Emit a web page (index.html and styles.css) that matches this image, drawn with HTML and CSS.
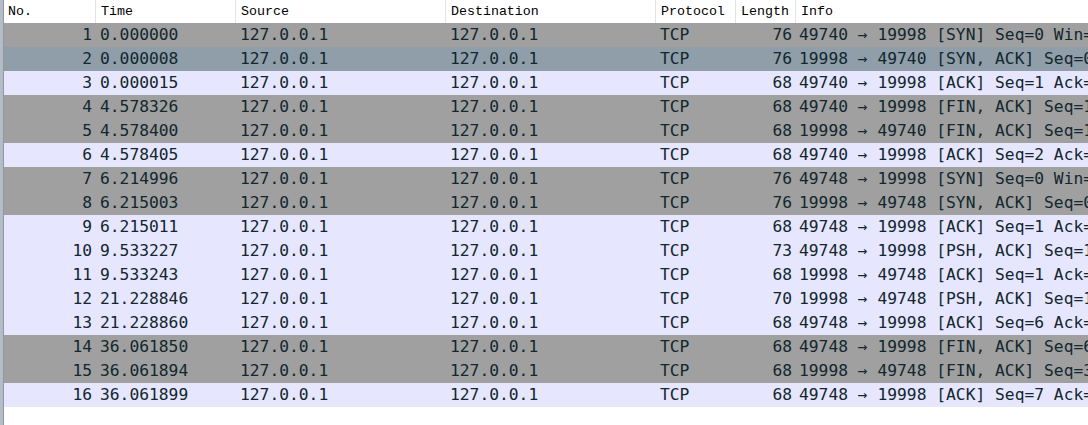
FILE: index.html
```html
<!DOCTYPE html>
<html>
<head>
<meta charset="utf-8">
<link rel="stylesheet" href="styles.css">
</head>
<body>
<div class="frame">
  <div class="edge"></div>
  <div class="list">
    <div class="row head">
      <div class="c">No.</div><div class="c">Time</div><div class="c">Source</div><div class="c">Destination</div><div class="c">Protocol</div><div class="c">Length</div><div class="c last">Info</div>
    </div>
    <div class="row pk synfin"><div class="c r">1</div><div class="c">0.000000</div><div class="c">127.0.0.1</div><div class="c">127.0.0.1</div><div class="c">TCP</div><div class="c r">76</div><div class="c last">49740 → 19998 [SYN] Seq=0 Win=65535 Len=0 MSS=65495 WS=256 SACK_PERM</div></div>
    <div class="row pk sel"><div class="c r">2</div><div class="c">0.000008</div><div class="c">127.0.0.1</div><div class="c">127.0.0.1</div><div class="c">TCP</div><div class="c r">76</div><div class="c last">19998 → 49740 [SYN, ACK] Seq=0 Ack=1 Win=65535 Len=0 MSS=65495</div></div>
    <div class="row pk tcp"><div class="c r">3</div><div class="c">0.000015</div><div class="c">127.0.0.1</div><div class="c">127.0.0.1</div><div class="c">TCP</div><div class="c r">68</div><div class="c last">49740 → 19998 [ACK] Seq=1 Ack=1 Win=2619648 Len=0</div></div>
    <div class="row pk synfin"><div class="c r">4</div><div class="c">4.578326</div><div class="c">127.0.0.1</div><div class="c">127.0.0.1</div><div class="c">TCP</div><div class="c r">68</div><div class="c last">49740 → 19998 [FIN, ACK] Seq=1 Ack=1 Win=2619648 Len=0</div></div>
    <div class="row pk synfin"><div class="c r">5</div><div class="c">4.578400</div><div class="c">127.0.0.1</div><div class="c">127.0.0.1</div><div class="c">TCP</div><div class="c r">68</div><div class="c last">19998 → 49740 [FIN, ACK] Seq=1 Ack=2 Win=2619648 Len=0</div></div>
    <div class="row pk tcp"><div class="c r">6</div><div class="c">4.578405</div><div class="c">127.0.0.1</div><div class="c">127.0.0.1</div><div class="c">TCP</div><div class="c r">68</div><div class="c last">49740 → 19998 [ACK] Seq=2 Ack=2 Win=2619648 Len=0</div></div>
    <div class="row pk synfin"><div class="c r">7</div><div class="c">6.214996</div><div class="c">127.0.0.1</div><div class="c">127.0.0.1</div><div class="c">TCP</div><div class="c r">76</div><div class="c last">49748 → 19998 [SYN] Seq=0 Win=65535 Len=0 MSS=65495 WS=256 SACK_PERM</div></div>
    <div class="row pk synfin"><div class="c r">8</div><div class="c">6.215003</div><div class="c">127.0.0.1</div><div class="c">127.0.0.1</div><div class="c">TCP</div><div class="c r">76</div><div class="c last">19998 → 49748 [SYN, ACK] Seq=0 Ack=1 Win=65535 Len=0 MSS=65495</div></div>
    <div class="row pk tcp"><div class="c r">9</div><div class="c">6.215011</div><div class="c">127.0.0.1</div><div class="c">127.0.0.1</div><div class="c">TCP</div><div class="c r">68</div><div class="c last">49748 → 19998 [ACK] Seq=1 Ack=1 Win=2619648 Len=0</div></div>
    <div class="row pk tcp"><div class="c r">10</div><div class="c">9.533227</div><div class="c">127.0.0.1</div><div class="c">127.0.0.1</div><div class="c">TCP</div><div class="c r">73</div><div class="c last">49748 → 19998 [PSH, ACK] Seq=1 Ack=1 Win=2619648 Len=5</div></div>
    <div class="row pk tcp"><div class="c r">11</div><div class="c">9.533243</div><div class="c">127.0.0.1</div><div class="c">127.0.0.1</div><div class="c">TCP</div><div class="c r">68</div><div class="c last">19998 → 49748 [ACK] Seq=1 Ack=6 Win=2619648 Len=0</div></div>
    <div class="row pk tcp"><div class="c r">12</div><div class="c">21.228846</div><div class="c">127.0.0.1</div><div class="c">127.0.0.1</div><div class="c">TCP</div><div class="c r">70</div><div class="c last">19998 → 49748 [PSH, ACK] Seq=1 Ack=6 Win=2619648 Len=2</div></div>
    <div class="row pk tcp"><div class="c r">13</div><div class="c">21.228860</div><div class="c">127.0.0.1</div><div class="c">127.0.0.1</div><div class="c">TCP</div><div class="c r">68</div><div class="c last">49748 → 19998 [ACK] Seq=6 Ack=3 Win=2619648 Len=0</div></div>
    <div class="row pk synfin"><div class="c r">14</div><div class="c">36.061850</div><div class="c">127.0.0.1</div><div class="c">127.0.0.1</div><div class="c">TCP</div><div class="c r">68</div><div class="c last">49748 → 19998 [FIN, ACK] Seq=6 Ack=3 Win=2619648 Len=0</div></div>
    <div class="row pk synfin"><div class="c r">15</div><div class="c">36.061894</div><div class="c">127.0.0.1</div><div class="c">127.0.0.1</div><div class="c">TCP</div><div class="c r">68</div><div class="c last">19998 → 49748 [FIN, ACK] Seq=3 Ack=7 Win=2619648 Len=0</div></div>
    <div class="row pk tcp"><div class="c r">16</div><div class="c">36.061899</div><div class="c">127.0.0.1</div><div class="c">127.0.0.1</div><div class="c">TCP</div><div class="c r">68</div><div class="c last">49748 → 19998 [ACK] Seq=7 Ack=4 Win=2619648 Len=0</div></div>
  </div>
</div>
</body>
</html>
```

FILE: styles.css
```css
html, body {
  margin: 0;
  padding: 0;
  background: #ffffff;
  width: 1088px;
  height: 425px;
  overflow: hidden;
}

.frame {
  display: flex;
  height: 425px;
}

.edge {
  width: 3px;
  flex: none;
  background: #b4bcc6;
  border-right: 1px solid #8d97a4;
}

.list {
  flex: 1;
  min-width: 0;
  overflow: hidden;
}

.row {
  display: grid;
  grid-template-columns: 92px 140px 210px 210px 80px 60px 1fr;
  white-space: nowrap;
}

.c {
  overflow: hidden;
  padding: 0 4px;
}

.c.r {
  text-align: right;
}

.head {
  height: 23px;
  background: #ffffff;
  font-family: "Liberation Mono", monospace;
  font-size: 13.3px;
  color: #000000;
  line-height: 23px;
}

.head .c {
  border-right: 1px solid #e3e3e3;
  padding-left: 4px;
}

.head .c:nth-child(n+2) {
  padding-left: 5px;
}

.head .c.last {
  border-right: none;
}

.pk {
  height: 24px;
  line-height: 24px;
  font-family: "DejaVu Sans Mono", monospace;
  font-size: 16.3px;
  color: #12272e;
}

.pk .c.last {
  overflow: visible;
  padding-left: 3px;
}

.synfin {
  background: #a0a0a0;
}

.sel {
  background: #8f9ea9;
}

.tcp {
  background: #e7e6ff;
}
```
